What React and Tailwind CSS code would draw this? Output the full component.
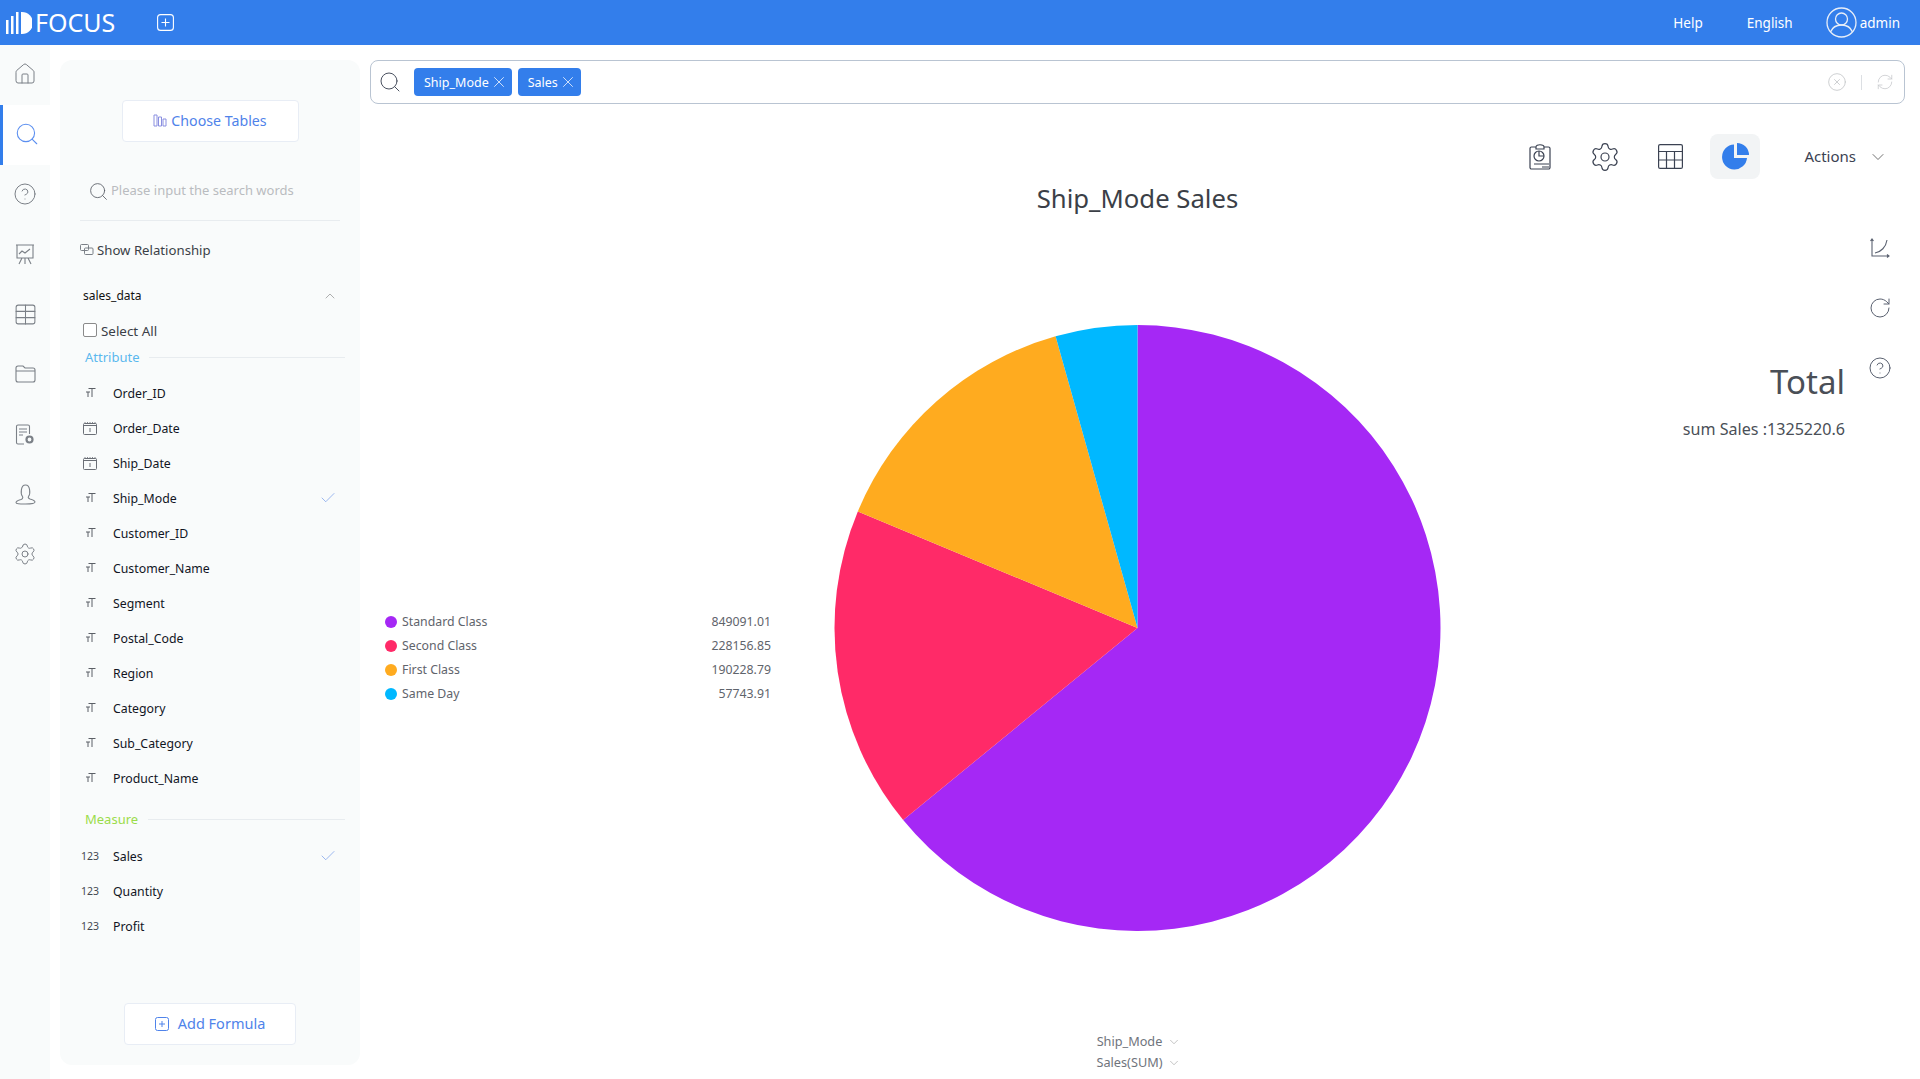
import { ChevronDown, ChevronUp, Check, X, Search, House, CircleHelp, Table, Settings, RotateCw, RefreshCw, CircleX } from 'lucide-react';

const font = { fontFamily: '"Noto Sans", "Open Sans", sans-serif' };

const attributes = [
  ['text', 'Order_ID'],
  ['date', 'Order_Date'],
  ['date', 'Ship_Date'],
  ['text', 'Ship_Mode', true],
  ['text', 'Customer_ID'],
  ['text', 'Customer_Name'],
  ['text', 'Segment'],
  ['text', 'Postal_Code'],
  ['text', 'Region'],
  ['text', 'Category'],
  ['text', 'Sub_Category'],
  ['text', 'Product_Name'],
];

const measures = [
  ['Sales', true],
  ['Quantity'],
  ['Profit'],
];

const legend = [
  ['#a528f5', 'Standard Class', '849091.01', 849091.01],
  ['#ff2a68', 'Second Class', '228156.85', 228156.85],
  ['#ffab1f', 'First Class', '190228.79', 190228.79],
  ['#00b8ff', 'Same Day', '57743.91', 57743.91],
];

function piePaths(cx, cy, r) {
  const total = legend.reduce((s, l) => s + l[3], 0);
  let a = 0;
  return legend.map(l => {
    const b = a + (l[3] / total) * Math.PI * 2;
    const x1 = cx + r * Math.sin(a);
    const y1 = cy - r * Math.cos(a);
    const x2 = cx + r * Math.sin(b);
    const y2 = cy - r * Math.cos(b);
    const large = b - a > Math.PI ? 1 : 0;
    a = b;
    return { color: l[0], d: `M${cx} ${cy}L${x1} ${y1}A${r} ${r} 0 ${large} 1 ${x2} ${y2}Z` };
  });
}

function TextType() {
  return (
    <svg width="10" height="10" viewBox="0 0 10 10" fill="none" stroke="#5b5f66" strokeWidth="1" className="ml-[3px] -mt-[2px]">
      <path d="M2.500 0.500h7M6 0.500v8.500M0 4h4M2 4v5" />
    </svg>
  );
}

function DateType() {
  return (
    <svg width="14" height="13" viewBox="0 0 14 13" fill="none" stroke="#6b6f76" strokeWidth="1" className="-mt-[2px]">
      <rect x="0.5" y="1.5" width="13" height="11" rx="1" />
      <path d="M0.5 3.5h13M7 6v4" />
      <path d="M2 0v2M4.5 0v2M7 0v2M9.5 0v2M12 0v2" strokeWidth="0.8" />
    </svg>
  );
}

function Logo() {
  return (
    <svg width="26" height="24" viewBox="0 0 26 24" fill="white">
      <rect x="0" y="9" width="2.500" height="14" />
      <rect x="5" y="5" width="2.500" height="18" />
      <rect x="10" y="1" width="2.500" height="22" />
      <path d="M15 1h1a11 11 0 0 1 0 22h-1z" />
    </svg>
  );
}

function RailIcon({ children, active }) {
  return (
    <div className={`h-[60px] pb-[2px] flex items-center justify-center ${active ? 'bg-white border-l-[3px] border-[#337eeb]' : ''}`}>
      {children}
    </div>
  );
}

function Rail() {
  const c = '#7b8087';
  return (
    <div className="w-[50px] bg-[#f9fbfb] shrink-0">
      <RailIcon><House size={24} color={c} strokeWidth={1} /></RailIcon>
      <RailIcon active>
        <Search size={26} color="#5b8ff0" strokeWidth={1} />
      </RailIcon>
      <RailIcon><CircleHelp size={24} color={c} strokeWidth={1} /></RailIcon>
      <RailIcon>
        <svg width="20" height="21" viewBox="0 0 20 21" fill="none" stroke={c} strokeWidth="1.1">
          <path d="M1 1h18M2 1v13h16V1M4 10l3-3 3 2 5-4M10 14v6M7 14l-3 6M13 14l3 6" />
        </svg>
      </RailIcon>
      <RailIcon><Table size={25} color={c} strokeWidth={1} /></RailIcon>
      <RailIcon>
        <svg width="21" height="18" viewBox="0 0 21 18" fill="none" stroke={c} strokeWidth="1.1">
          <path d="M1 3a2 2 0 0 1 2-2h5l2 2h8a2 2 0 0 1 2 2v10a2 2 0 0 1-2 2H3a2 2 0 0 1-2-2zM1 6h19" />
        </svg>
      </RailIcon>
      <RailIcon>
        <svg width="20" height="21" viewBox="0 0 20 21" fill="none" stroke={c} strokeWidth="1.1">
          <path d="M9 20H3a1.500 1.500 0 0 1-1.500-1.500v-16A1.500 1.500 0 0 1 3 1h10a1.500 1.500 0 0 1 1.500 1.500V10M4 5h8M4 8h8M4 11h4" />
          <circle cx="14.500" cy="15.500" r="3" strokeWidth="2.200" />
        </svg>
      </RailIcon>
      <RailIcon>
        <svg width="21" height="21" viewBox="0 0 21 21" fill="none" stroke={c} strokeWidth="1.1">
          <path d="M7.500 12.500C5.500 10 5.500 1 10.500 1s5 9 3 11.500c-.8 1 .2 2 1.500 2.500 3 1 5 1.500 5 3s-3 2-9.500 2S1 20 1 18.500s2-2 5-3c1.300-.5 2.300-2 1.500-3z" />
        </svg>
      </RailIcon>
      <RailIcon><Settings size={24} color={c} strokeWidth={1} /></RailIcon>
    </div>
  );
}

function Row({ icon, label, checked }) {
  return (
    <div className="h-[35px] flex items-center">
      <div className="w-[32px] pl-[2px] flex items-center">{icon}</div>
      <span className="text-[12.300px] text-[#11151f]">{label}</span>
      {checked && <Check size={18} color="#6f96e8" strokeWidth={0.9} className="ml-auto mr-[3px] -mt-[2px]" />}
    </div>
  );
}

function Sidebar() {
  return (
    <div className="w-[300px] h-[1005px] mt-[15px] ml-[10px] shrink-0 bg-[#f9fbfb] rounded-xl flex flex-col">
      <button className="mt-[40px] mx-auto w-[177px] h-[42px] pb-[1px] bg-white border border-[#e8edf5] rounded flex items-center justify-center gap-[4px] text-[14.200px] text-[#4f83ea]">
        <svg width="14" height="13" viewBox="0 0 14 13" fill="none" stroke="#8a8fe0" strokeWidth="1">
          <path d="M1 1h3v11H1zM5.500 3h3v9h-3zM10 5h3v7h-3z" />
        </svg>
        Choose Tables
      </button>
      <div className="mt-[36px] mx-[20px] h-[43px] border-b border-[#e8ecef] flex items-start pl-[8px] pt-[3px] gap-[2px]">
        <Search size={21} color="#5b6068" strokeWidth={1} />
        <span className="text-[13px] text-[#b9bcc0]">Please input the search words</span>
      </div>
      <div className="mt-[20px] ml-[20px] flex items-center gap-[3px] text-[13.200px] text-[#3b3f47]">
        <svg width="14" height="12" viewBox="0 0 14 12" fill="none" stroke="#7b8087" strokeWidth="1" className="-mt-[2px]">
          <rect x="0.500" y="0.500" width="8" height="6" rx="1" />
          <rect x="4.500" y="4" width="8.500" height="6.500" rx="1" />
        </svg>
        Show Relationship
      </div>
      <div className="mt-[26px] pl-[23px] pr-[22px] flex items-center justify-between">
        <span className="text-[12px] text-[#111]">sales_data</span>
        <ChevronUp size={16} color="#888" strokeWidth={1} />
      </div>
      <label className="mt-[16px] pl-[23px] flex items-center gap-[4px] text-[13.400px] text-[#3b3f47]">
        <span className="w-[14px] h-[14px] -mt-[2px] border border-[#8a8a8a] rounded-[2px] bg-white" />
        Select All
      </label>
      <div className="mt-[7px] pl-[25px] pr-[15px] flex items-center gap-[10px] h-[20px]">
        <span className="text-[13px] text-[#5bb8ee]">Attribute</span>
        <span className="flex-1 h-px bg-[#e8ecef]" />
      </div>
      <div className="mt-[9px] pl-[21px] pr-[20px]">
        {attributes.map(([type, label, checked]) => (
          <Row key={label} label={label} checked={checked} icon={type === 'date' ? <DateType /> : <TextType />} />
        ))}
      </div>
      <div className="mt-[13px] pl-[25px] pr-[15px] flex items-center gap-[10px] h-[20px]">
        <span className="text-[13px] text-[#9bdc4a]">Measure</span>
        <span className="flex-1 h-px bg-[#e8ecef]" />
      </div>
      <div className="mt-[10px] pl-[21px] pr-[20px]">
        {measures.map(([label, checked]) => (
          <Row key={label} label={label} checked={checked} icon={<span className="text-[10.500px] text-[#444850] -ml-[2px] -mt-[2px]">123</span>} />
        ))}
      </div>
      <button className="mt-auto mb-[20px] mx-auto w-[172px] h-[42px] bg-white border border-[#e8edf5] rounded flex items-center justify-center gap-[9px] text-[14.500px] text-[#4f83ea]">
        <svg width="14" height="14" viewBox="0 0 14 14" fill="none" stroke="#4f83ea" strokeWidth="1">
          <rect x="0.500" y="0.500" width="13" height="13" rx="2" />
          <path d="M7 4v6M4 7h6" />
        </svg>
        Add Formula
      </button>
    </div>
  );
}

function Tag({ label }) {
  return (
    <span className="h-[28px] pl-[10px] pr-[4px] bg-[#337eeb] rounded flex items-center gap-[1px] text-[12.500px] text-white">
      <span className="pt-[2px]">{label}</span>
      <X size={18} color="white" strokeWidth={1} />
    </span>
  );
}

function Toolbar() {
  const c = '#3b4252';
  return (
    <div className="mt-[30px] h-[45px] flex items-center justify-end pr-[6px]">
      <svg width="22" height="26" viewBox="0 0 22 26" fill="none" stroke={c} strokeWidth="1.200">
        <path d="M7 3H2.500A1.500 1.500 0 0 0 1 4.500v19A1.500 1.500 0 0 0 2.500 25h17a1.500 1.500 0 0 0 1.500-1.500v-19A1.500 1.500 0 0 0 19.500 3H15M7 3c0-3 8-3 8 0v2H7z" />
        <circle cx="10" cy="12" r="5" />
        <path d="M10 7v5h5M5 20h15M13 23h7" />
      </svg>
      <Settings size={32} color={c} strokeWidth={0.9} className="ml-[38.500px]" />
      <svg width="25" height="25" viewBox="0 0 25 25" fill="none" stroke={c} strokeWidth="1.200" className="ml-[37px]">
        <rect x="0.600" y="0.600" width="23.800" height="23.800" rx="1.500" />
        <path d="M0.600 7.500h23.800M0.600 16h23.800M8.500 7.500v17M16.500 7.500v17" />
      </svg>
      <div className="ml-[27px] w-[50px] h-[45px] rounded-lg bg-[#f2f4f5] flex items-center justify-center">
        <svg width="27" height="27" viewBox="0 0 27 27" fill="#337eeb">
          <path d="M12 1.500a12.500 12.500 0 1 0 13 13.500H12z" />
          <path d="M15 0a12 12 0 0 1 12 12H15z" />
        </svg>
      </div>
      <span className="ml-[44px] text-[15px] text-[#3b4252]">Actions</span>
      <ChevronDown size={20} color="#555" strokeWidth={1} className="ml-[12px] mr-[11px]" />
    </div>
  );
}

export default function App() {
  return (
    <div className="w-[1920px] h-[1079px] overflow-hidden bg-white flex flex-col" style={font}>
      <header className="h-[45px] bg-[#337eeb] flex items-center shrink-0 text-white">
        <div className="ml-[6px]"><Logo /></div>
        <span className="ml-[3px] text-[25px] leading-none">FOCUS</span>
        <svg width="17" height="17" viewBox="0 0 17 17" fill="none" stroke="white" strokeWidth="1.100" className="ml-[42px]">
          <rect x="0.600" y="0.600" width="15.800" height="15.800" rx="3" />
          <path d="M8.500 4.500v8M4.500 8.500h8" />
        </svg>
        <span className="ml-auto pt-px text-[13.500px]">Help</span>
        <span className="ml-[44px] pt-px text-[13.500px]">English</span>
        <svg width="31" height="31" viewBox="0 0 31 31" fill="none" stroke="#e8eef8" strokeWidth="1.300" className="ml-[33px]">
          <circle cx="15.500" cy="15.500" r="14.500" />
          <circle cx="15.500" cy="12" r="6" />
          <path d="M4.500 25c2-5 6-7 11-7s9 2 11 7" />
        </svg>
        <span className="ml-[3px] mr-[20px] pt-px text-[13.500px]">admin</span>
      </header>

      <div className="flex flex-1 min-h-0">
        <Rail />
        <Sidebar />
        <main className="flex-1 min-w-0 pl-[10px] pr-[15px] pt-[15px] relative">
          <div className="h-[44px] border border-[#b9c4d2] rounded-lg flex items-center gap-[6px] pl-[7px] pr-[10px]">
            <Search size={24} color="#4a5160" strokeWidth={1} />
            <span className="w-0" />
            <Tag label="Ship_Mode" />
            <Tag label="Sales" />
            <CircleX size={20} color="#c4c6c9" strokeWidth={1} className="ml-auto" />
            <span className="w-px h-[15px] bg-[#dcdfe3] mx-[8px]" />
            <RefreshCw size={18} color="#c4c6c9" strokeWidth={1} />
          </div>

          <Toolbar />

          <h1 className="pt-px text-center text-[25.700px] leading-[38px] text-[#3b3f47]">Ship_Mode Sales</h1>

          <div className="absolute left-[10px] top-0 w-[1535px] h-[1034px] pointer-events-none">
            <svg width="1535" height="1034" viewBox="370 45 1535 1034" className="absolute left-0 top-0">
              {piePaths(1137.5, 628, 303).map(p => (
                <path key={p.color} d={p.d} fill={p.color} />
              ))}
            </svg>
          </div>

          <div className="absolute left-[25px] top-[565px] w-[386px]">
            {legend.map(([color, name, value]) => (
              <div key={name} className="h-[24px] flex items-center text-[12.300px] text-[#5f646c]">
                <span className="w-[12px] h-[12px] rounded-full mr-[5px] -mt-px" style={{ backgroundColor: color }} />
                {name}
                <span className="ml-auto">{value}</span>
              </div>
            ))}
          </div>

          <div className="absolute right-[75px] top-[309px] text-right text-[#4a4f57]">
            <div className="text-[33px] leading-[56px]">Total</div>
            <div className="text-[16.100px] leading-[36px] pt-px">sum Sales :1325220.6</div>
          </div>

          <div className="absolute right-[28px] top-[191px] flex flex-col gap-[36px]">
            <span className="w-[24px] h-[24px] flex items-center justify-center">
              <svg width="20" height="20" viewBox="0 0 20 20" fill="none" stroke="#5a6170" strokeWidth="1.100">
                <path d="M2 1v17h17M0.500 3L2 1l1.500 2M17 16.500l2 1.500-2 1.500M5 15c6-1 11-6 12-13" />
              </svg>
            </span>
            <RotateCw size={24} color="#5a6170" strokeWidth={1} />
            <CircleHelp size={24} color="#5a6170" strokeWidth={1} />
          </div>

          <div className="absolute left-[708px] top-[986px] w-[142px] text-[12.700px] text-[#6f747c]">
            <div className="h-[21px] flex items-center justify-center gap-[5px]">Ship_Mode <ChevronDown size={14} color="#999" strokeWidth={1} /></div>
            <div className="h-[21px] flex items-center justify-center gap-[5px]">Sales(SUM) <ChevronDown size={14} color="#999" strokeWidth={1} /></div>
          </div>
        </main>
      </div>
    </div>
  );
}
